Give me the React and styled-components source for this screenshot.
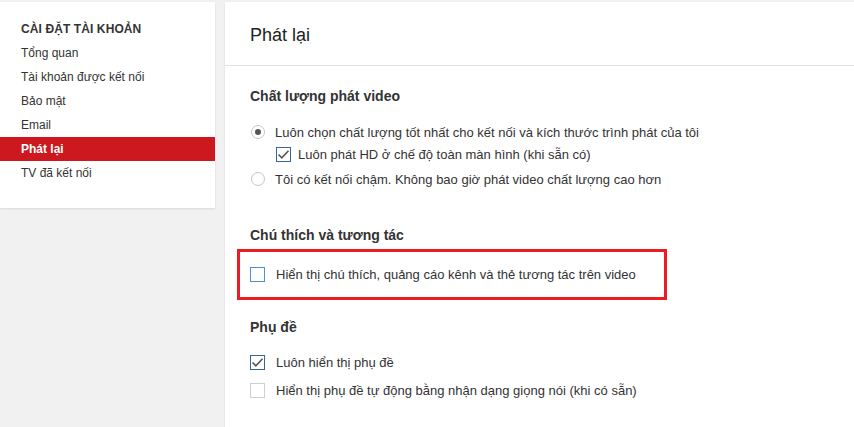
import React from "react";
import styled, { createGlobalStyle } from "styled-components";

const GlobalStyle = createGlobalStyle`
  html, body {
    margin: 0;
    padding: 0;
    background: #f1f1f1;
    font-family: "Liberation Sans", Arial, sans-serif;
    color: #333;
  }
`;

const Page = styled.div`
  display: flex;
  align-items: flex-start;
  gap: 10px;
  padding-top: 2px;
  width: 854px;
  height: 425px;
  overflow: hidden;
`;

const Sidebar = styled.div`
  width: 215px;
  height: 206px;
  flex-shrink: 0;
  background: #fff;
  box-shadow: 0 1px 2px rgba(0, 0, 0, 0.1);
  box-sizing: border-box;
  padding-top: 20px;
`;

const SideTitle = styled.div`
  padding: 0 21px;
  font-size: 12px;
  font-weight: bold;
  color: #333;
  line-height: 14px;
  margin-bottom: 5px;
  letter-spacing: 0.1px;
`;

const SideItem = styled.div`
  height: 24px;
  line-height: 24px;
  padding: 0 21px;
  font-size: 12px;
  color: ${(p) => (p.active ? "#fff" : "#333")};
  background: ${(p) => (p.active ? "#cc181e" : "transparent")};
  font-weight: ${(p) => (p.active ? "bold" : "normal")};
`;

const Main = styled.div`
  flex: 1;
  height: 425px;
  background: #fff;
  box-shadow: 0 1px 2px rgba(0, 0, 0, 0.1);
`;

const Header = styled.div`
  height: 64px;
  box-sizing: border-box;
  padding: 23px 25px 0;
  font-size: 18px;
  color: #222;
  border-bottom: 1px solid #e2e2e2;
`;

const Body = styled.div`
  padding: 21px 25px 0;
`;

const Section = styled.div`
  margin-bottom: ${(p) => p.gap ?? 0}px;
`;

const SectionTitle = styled.div`
  font-size: 14px;
  font-weight: bold;
  color: #333;
  line-height: 18px;
  margin-bottom: ${(p) => p.gap ?? 16}px;
`;

const Row = styled.div`
  display: flex;
  align-items: center;
  height: ${(p) => p.h ?? 24}px;
  padding-left: ${(p) => p.indent ?? 0}px;
  font-size: 13px;
  color: #333;
  gap: ${(p) => p.gap ?? 10}px;
`;

const Radio = styled.span`
  width: 14px;
  height: 14px;
  border-radius: 50%;
  border: 1px solid #c6c6c6;
  box-sizing: border-box;
  background: #fff;
  display: flex;
  align-items: center;
  justify-content: center;
  flex-shrink: 0;
  margin-left: 1px;
  &::after {
    content: "";
    width: 6px;
    height: 6px;
    border-radius: 50%;
    background: ${(p) => (p.checked ? "#555" : "transparent")};
  }
`;

const Box = styled.span`
  width: 15px;
  height: 15px;
  box-sizing: border-box;
  border: 1px solid ${(p) => p.border};
  background: #fff;
  display: flex;
  align-items: center;
  justify-content: center;
  flex-shrink: 0;
`;

const Highlight = styled.div`
  border: 3px solid #ed1c24;
  margin: 5px 0 0 -13px;
  width: 430px;
  height: 51px;
  box-sizing: border-box;
  padding-left: 10px;
  display: flex;
  align-items: center;
`;

const Check = ({ border, checked }) => (
  <Box border={border}>
    {checked && (
      <svg width="13" height="11" viewBox="0 0 13 11">
        <path d="M1.5 5.5 L4.8 8.8 L11.5 1.8" fill="none" stroke="#555" strokeWidth="1.6" />
      </svg>
    )}
  </Box>
);

const menu = ["Tổng quan", "Tài khoản được kết nối", "Bảo mật", "Email", "Phát lại", "TV đã kết nối"];

export default function App() {
  return (
    <>
      <GlobalStyle />
      <Page>
        <Sidebar>
          <SideTitle>CÀI ĐẶT TÀI KHOẢN</SideTitle>
          {menu.map((m) => (
            <SideItem key={m} active={m === "Phát lại"}>
              {m}
            </SideItem>
          ))}
        </Sidebar>
        <Main>
          <Header>Phát lại</Header>
          <Body>
            <Section gap={33}>
              <SectionTitle gap={16}>Chất lượng phát video</SectionTitle>
              <Row h={22}>
                <Radio checked />
                <span>Luôn chọn chất lượng tốt nhất cho kết nối và kích thước trình phát của tôi</span>
              </Row>
              <Row h={22} indent={26} gap={7}>
                <Check border="#36649b" checked />
                <span>Luôn phát HD ở chế độ toàn màn hình (khi sẵn có)</span>
              </Row>
              <Row h={28}>
                <Radio />
                <span>Tôi có kết nối chậm. Không bao giờ phát video chất lượng cao hơn</span>
              </Row>
            </Section>
            <Section gap={18}>
              <SectionTitle gap={0}>Chú thích và tương tác</SectionTitle>
              <Highlight>
                <Row gap={11}>
                  <Check border="#4a90e2" />
                  <span>Hiển thị chú thích, quảng cáo kênh và thẻ tương tác trên video</span>
                </Row>
              </Highlight>
            </Section>
            <Section>
              <SectionTitle gap={12}>Phụ đề</SectionTitle>
              <Row h={28} gap={11}>
                <Check border="#36649b" checked />
                <span>Luôn hiển thị phụ đề</span>
              </Row>
              <Row h={28} gap={11}>
                <Check border="#cfcfcf" />
                <span>Hiển thị phụ đề tự động bằng nhận dạng giọng nói (khi có sẵn)</span>
              </Row>
            </Section>
          </Body>
        </Main>
      </Page>
    </>
  );
}
